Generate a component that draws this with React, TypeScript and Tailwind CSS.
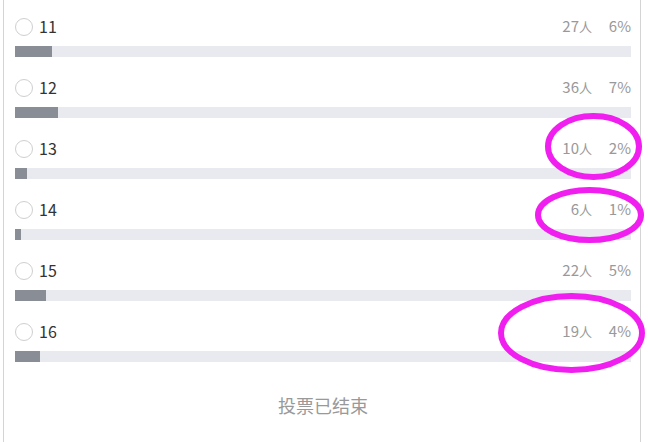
import React from "react";

const rows = [
  { label: "11", count: 27, pct: 6 },
  { label: "12", count: 36, pct: 7 },
  { label: "13", count: 10, pct: 2 },
  { label: "14", count: 6, pct: 1 },
  { label: "15", count: 22, pct: 5 },
  { label: "16", count: 19, pct: 4 },
];

export default function App() {
  return (
    <div
      className="relative w-[648px] h-[442px] overflow-hidden bg-white"
      style={{ fontFamily: '"Microsoft YaHei", "Noto Sans CJK SC", "Noto Sans", sans-serif' }}
    >
      <div className="ml-[3px] w-[638px] h-[460px] border-x border-[#d4d4d4] pl-[11px] pr-[9px] pt-[12px]">
        {rows.map((r) => (
          <div key={r.label} className="mb-[16px]">
            <div className="flex h-[30px] items-center">
              <span className="box-border h-[18px] w-[18px] rounded-full border border-[#cfcfcf]" />
              <span className="ml-[6px] pb-[3px] text-[16px] leading-none text-[#333]">{r.label}</span>
              <span className="ml-auto flex items-center pb-[3px] text-[15px] leading-none text-[#999]">
                <span>
                  {r.count}
                  <span className="text-[13px]">人</span>
                </span>
                <span className="w-[39px] text-right">{r.pct}%</span>
              </span>
            </div>
            <div className="mt-[4px] h-[11px] w-full bg-[#e8eaef]">
              <div className="h-full bg-[#898d96]" style={{ width: `${r.pct}%` }} />
            </div>
          </div>
        ))}
        <div className="mt-[31px] text-center text-[18px] leading-[24px] text-[#999]">投票已结束</div>
      </div>
      <svg className="pointer-events-none absolute left-0 top-0" width="648" height="442">
        <ellipse cx="593.5" cy="146.5" rx="45.5" ry="30.5" fill="none" stroke="#f01ff0" strokeWidth="6" />
        <ellipse cx="589.5" cy="215" rx="51.5" ry="25" fill="none" stroke="#f01ff0" strokeWidth="6" />
        <ellipse cx="571.5" cy="333" rx="70.5" ry="37" fill="none" stroke="#f01ff0" strokeWidth="6" />
      </svg>
    </div>
  );
}
